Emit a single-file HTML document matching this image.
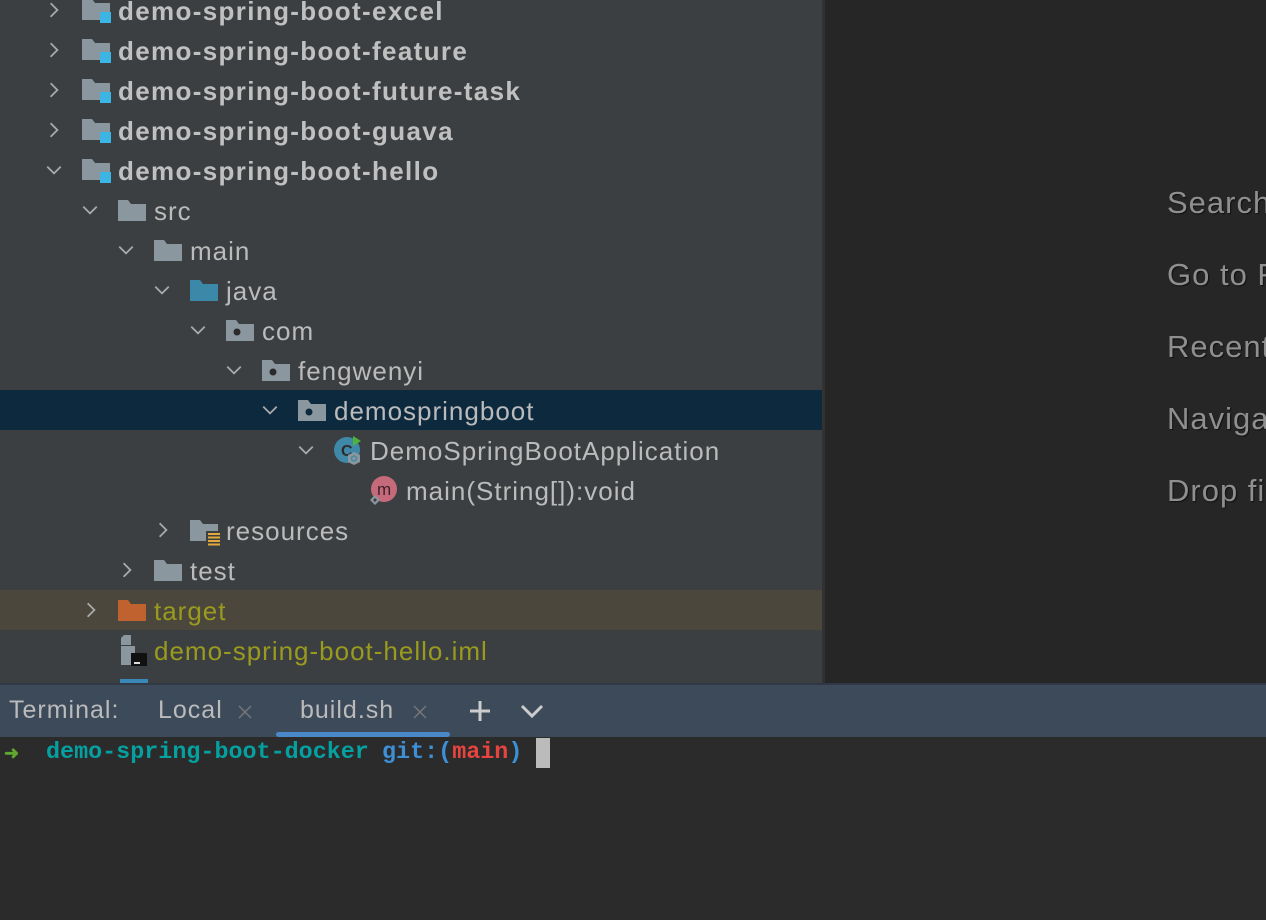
<!DOCTYPE html>
<html><head><meta charset="utf-8"><style>
*{margin:0;padding:0;box-sizing:border-box}
body{width:1266px;height:920px;overflow:hidden;background:#262626;font-family:"Liberation Sans",sans-serif;position:relative}
#left{position:absolute;left:0;top:0;width:822px;height:684px;background:#3c3f41;overflow:hidden}
#div{position:absolute;left:822px;top:0;width:3px;height:684px;background:#323232}
.row{position:absolute;left:0;width:822px;height:40px}
.t{position:absolute;top:7px;font-size:26px;letter-spacing:1px;color:#bbbbbb;white-space:nowrap;line-height:28px}
.b{font-weight:bold;color:#c0c0c0;letter-spacing:1.35px}
.ch{position:absolute;top:11px;width:18px;height:18px}
.ic{position:absolute;top:8px}
.r{position:absolute;left:1167px;font-size:31px;letter-spacing:1px;color:#8f8f8f;text-shadow:1px 1px 1px #111;white-space:nowrap}
#tabs{position:absolute;left:0;top:683px;width:1266px;height:54px;background:#3d4a5a;border-top:2px solid #2f3844}
#term{position:absolute;left:0;top:737px;width:1266px;height:183px;background:#2b2b2b}
.mono{font-family:"Liberation Mono",monospace;font-weight:bold;font-size:23.4px;position:absolute;top:740px;white-space:nowrap}
.tb{position:absolute;top:11px;font-size:25px;letter-spacing:1px;color:#bbb}
</style></head><body>
<div id="left">
<div class="row" style="top:-10px"><svg class="ch" style="left:45px" viewBox="0 0 16 16"><path d="M5 2l6 6-6 6" stroke="#aaa" stroke-width="1.6" fill="none"/></svg>
<svg class="ic" style="left:82px" width="30" height="28"><path d="M0 1h10l3 4h15v17H0z" fill="#8b979f"/><rect x="18" y="14" width="11" height="11" fill="#3cb4e4"/></svg><span class="t b" style="left:118px">demo-spring-boot-excel</span></div>
<div class="row" style="top:30px"><svg class="ch" style="left:45px" viewBox="0 0 16 16"><path d="M5 2l6 6-6 6" stroke="#aaa" stroke-width="1.6" fill="none"/></svg>
<svg class="ic" style="left:82px" width="30" height="28"><path d="M0 1h10l3 4h15v17H0z" fill="#8b979f"/><rect x="18" y="14" width="11" height="11" fill="#3cb4e4"/></svg><span class="t b" style="left:118px">demo-spring-boot-feature</span></div>
<div class="row" style="top:70px"><svg class="ch" style="left:45px" viewBox="0 0 16 16"><path d="M5 2l6 6-6 6" stroke="#aaa" stroke-width="1.6" fill="none"/></svg>
<svg class="ic" style="left:82px" width="30" height="28"><path d="M0 1h10l3 4h15v17H0z" fill="#8b979f"/><rect x="18" y="14" width="11" height="11" fill="#3cb4e4"/></svg><span class="t b" style="left:118px">demo-spring-boot-future-task</span></div>
<div class="row" style="top:110px"><svg class="ch" style="left:45px" viewBox="0 0 16 16"><path d="M5 2l6 6-6 6" stroke="#aaa" stroke-width="1.6" fill="none"/></svg>
<svg class="ic" style="left:82px" width="30" height="28"><path d="M0 1h10l3 4h15v17H0z" fill="#8b979f"/><rect x="18" y="14" width="11" height="11" fill="#3cb4e4"/></svg><span class="t b" style="left:118px">demo-spring-boot-guava</span></div>
<div class="row" style="top:150px"><svg class="ch" style="left:45px" viewBox="0 0 16 16"><path d="M2 5l6 6 6-6" stroke="#aaa" stroke-width="1.6" fill="none"/></svg>
<svg class="ic" style="left:82px" width="30" height="28"><path d="M0 1h10l3 4h15v17H0z" fill="#8b979f"/><rect x="18" y="14" width="11" height="11" fill="#3cb4e4"/></svg><span class="t b" style="left:118px">demo-spring-boot-hello</span></div>
<div class="row" style="top:190px"><svg class="ch" style="left:81px" viewBox="0 0 16 16"><path d="M2 5l6 6 6-6" stroke="#aaa" stroke-width="1.6" fill="none"/></svg>
<svg class="ic" style="left:118px" width="30" height="28"><path d="M0 2h10l3 4h15v17H0z" fill="#8b979f"/></svg><span class="t" style="left:154px">src</span></div>
<div class="row" style="top:230px"><svg class="ch" style="left:117px" viewBox="0 0 16 16"><path d="M2 5l6 6 6-6" stroke="#aaa" stroke-width="1.6" fill="none"/></svg>
<svg class="ic" style="left:154px" width="30" height="28"><path d="M0 2h10l3 4h15v17H0z" fill="#8b979f"/></svg><span class="t" style="left:190px">main</span></div>
<div class="row" style="top:270px"><svg class="ch" style="left:153px" viewBox="0 0 16 16"><path d="M2 5l6 6 6-6" stroke="#aaa" stroke-width="1.6" fill="none"/></svg>
<svg class="ic" style="left:190px" width="30" height="28"><path d="M0 2h10l3 4h15v17H0z" fill="#3b88a8"/></svg><span class="t" style="left:226px">java</span></div>
<div class="row" style="top:310px"><svg class="ch" style="left:189px" viewBox="0 0 16 16"><path d="M2 5l6 6 6-6" stroke="#aaa" stroke-width="1.6" fill="none"/></svg>
<svg class="ic" style="left:226px" width="30" height="28"><path d="M0 2h10l3 4h15v17H0z" fill="#8b979f"/><circle cx="11" cy="14" r="3.5" fill="#2b2b2b"/></svg><span class="t" style="left:262px">com</span></div>
<div class="row" style="top:350px"><svg class="ch" style="left:225px" viewBox="0 0 16 16"><path d="M2 5l6 6 6-6" stroke="#aaa" stroke-width="1.6" fill="none"/></svg>
<svg class="ic" style="left:262px" width="30" height="28"><path d="M0 2h10l3 4h15v17H0z" fill="#8b979f"/><circle cx="11" cy="14" r="3.5" fill="#2b2b2b"/></svg><span class="t" style="left:298px">fengwenyi</span></div>
<div class="row" style="top:390px;background:#0d293e"><svg class="ch" style="left:261px" viewBox="0 0 16 16"><path d="M2 5l6 6 6-6" stroke="#aaa" stroke-width="1.6" fill="none"/></svg>
<svg class="ic" style="left:298px" width="30" height="28"><path d="M0 2h10l3 4h15v17H0z" fill="#8b979f"/><circle cx="11" cy="14" r="3.5" fill="#0d293e"/></svg><span class="t" style="left:334px">demospringboot</span></div>
<div class="row" style="top:430px"><svg class="ch" style="left:297px" viewBox="0 0 16 16"><path d="M2 5l6 6 6-6" stroke="#aaa" stroke-width="1.6" fill="none"/></svg>
<svg class="ic" style="left:333px;top:4px" width="34" height="32"><circle cx="14" cy="16" r="13" fill="#3f88a8"/><text x="8" y="22" font-size="16" font-family="Liberation Sans" fill="#2b2b2b" font-weight="bold">C</text><path d="M20 2l8 5-8 5z" fill="#4fb33a"/><path d="M21 18l6 3v7l-6 3-6-3v-7z" fill="#8b979f"/><circle cx="21" cy="24.5" r="2.5" stroke="#3f88a8" fill="none" stroke-width="1.3"/></svg><span class="t" style="left:370px">DemoSpringBootApplication</span></div>
<div class="row" style="top:470px"><svg class="ic" style="left:368px;top:4px" width="34" height="34"><circle cx="16" cy="15" r="13" fill="#c56a7b"/><text x="9" y="21" font-size="17" font-family="Liberation Sans" fill="#3b2226">m</text><path d="M7 21l5 5-5 5-5-5z" fill="#8b979f"/><path d="M7 24l2 2-2 2-2-2z" fill="#3c3f41"/></svg><span class="t" style="left:406px">main(String[]):void</span></div>
<div class="row" style="top:510px"><svg class="ch" style="left:154px" viewBox="0 0 16 16"><path d="M5 2l6 6-6 6" stroke="#aaa" stroke-width="1.6" fill="none"/></svg>
<svg class="ic" style="left:190px" width="32" height="32"><path d="M0 2h10l3 4h15v17H0z" fill="#8b979f"/><rect x="16" y="13" width="14" height="15" fill="#3c3f41"/><path d="M18 16h12M18 19.5h12M18 23h12M18 26.5h12" stroke="#e2a93a" stroke-width="2"/></svg><span class="t" style="left:226px">resources</span></div>
<div class="row" style="top:550px"><svg class="ch" style="left:118px" viewBox="0 0 16 16"><path d="M5 2l6 6-6 6" stroke="#aaa" stroke-width="1.6" fill="none"/></svg>
<svg class="ic" style="left:154px" width="30" height="28"><path d="M0 2h10l3 4h15v17H0z" fill="#8b979f"/></svg><span class="t" style="left:190px">test</span></div>
<div class="row" style="top:590px;background:#4b473c"><svg class="ch" style="left:82px" viewBox="0 0 16 16"><path d="M5 2l6 6-6 6" stroke="#aaa" stroke-width="1.6" fill="none"/></svg>
<svg class="ic" style="left:118px" width="30" height="28"><path d="M0 2h10l3 4h15v17H0z" fill="#c0622f"/></svg><span class="t" style="left:154px;color:#999a1e">target</span></div>
<div class="row" style="top:630px"><svg class="ic" style="left:121px;top:5px" width="30" height="32"><path d="M3 0h7v10H0V3z" fill="#8b979f"/><path d="M0 11h14v19H0z" fill="#8b979f"/><rect x="10" y="18" width="16" height="13" fill="#111"/><rect x="13" y="27" width="6" height="2" fill="#ddd"/></svg><span class="t" style="left:154px;color:#999a1e">demo-spring-boot-hello.iml</span></div>
<div class="row" style="top:670px"><span style="position:absolute;left:120px;top:9px;width:28px;height:5px;background:#3a88b8"></span></div>
</div>
<div id="div"></div>
<div class="r" style="top:185px">Search</div>
<div class="r" style="top:257px">Go to F</div>
<div class="r" style="top:329px">Recent</div>
<div class="r" style="top:401px">Naviga</div>
<div class="r" style="top:473px">Drop fi</div>
<div id="tabs">
<span class="tb" style="left:9px">Terminal:</span>
<span class="tb" style="left:158px">Local</span>
<svg style="position:absolute;left:237px;top:19px" width="16" height="16"><path d="M2 2l12 12M14 2L2 14" stroke="#777" stroke-width="1.5"/></svg>
<span class="tb" style="left:300px">build.sh</span>
<svg style="position:absolute;left:412px;top:19px" width="16" height="16"><path d="M2 2l12 12M14 2L2 14" stroke="#777" stroke-width="1.5"/></svg>
<svg style="position:absolute;left:469px;top:15px" width="22" height="22"><path d="M11 1v20M1 11h20" stroke="#ccc" stroke-width="3"/></svg>
<svg style="position:absolute;left:520px;top:18px" width="24" height="16"><path d="M2 3l10 10 10-10" stroke="#ccc" stroke-width="3" fill="none"/></svg>
<div style="position:absolute;left:276px;top:47px;width:174px;height:5px;border-radius:3px;background:#4a88c7"></div>
</div>
<div id="term"></div>
<span class="mono" style="left:4px;color:#5fa82d;font-size:18px;top:743px">➜</span>
<span class="mono" style="left:46px;color:#05a0a0">demo-spring-boot-docker</span>
<span class="mono" style="left:382px;color:#3d8fd6">git:(<span style="color:#e6453f">main</span>)</span>
<div style="position:absolute;left:536px;top:738px;width:14px;height:30px;background:#bbb"></div>
</body></html>
